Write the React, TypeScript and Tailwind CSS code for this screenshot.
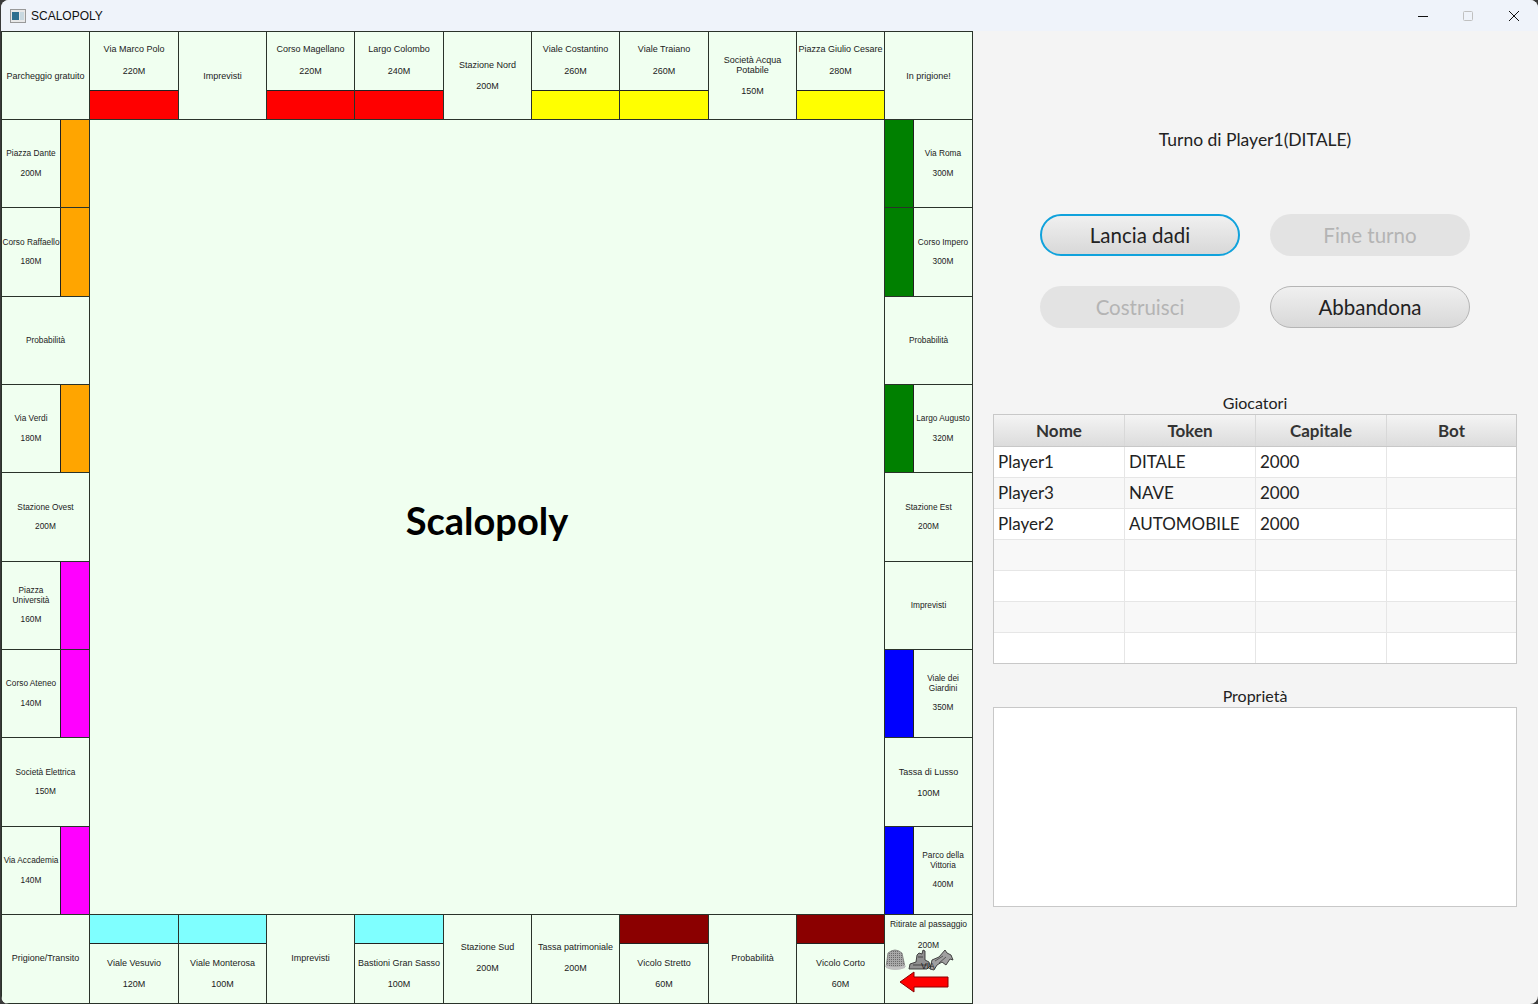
const TOP = [
  { n: "Parcheggio gratuito" },
  { n: "Via Marco Polo", p: "220M", c: "bg-[#ff0000]" },
  { n: "Imprevisti" },
  { n: "Corso Magellano", p: "220M", c: "bg-[#ff0000]" },
  { n: "Largo Colombo", p: "240M", c: "bg-[#ff0000]" },
  { n: "Stazione Nord", p: "200M" },
  { n: "Viale Costantino", p: "260M", c: "bg-[#ffff00]" },
  { n: "Viale Traiano", p: "260M", c: "bg-[#ffff00]" },
  { n: "Società Acqua Potabile", p: "150M" },
  { n: "Piazza Giulio Cesare", p: "280M", c: "bg-[#ffff00]" },
  { n: "In prigione!" },
];
const LEFT = [
  { n: "Piazza Dante", p: "200M", c: "bg-[#ffa500]" },
  { n: "Corso Raffaello", p: "180M", c: "bg-[#ffa500]" },
  { n: "Probabilità" },
  { n: "Via Verdi", p: "180M", c: "bg-[#ffa500]" },
  { n: "Stazione Ovest", p: "200M" },
  { n: "Piazza Università", p: "160M", c: "bg-[#ff00ff]" },
  { n: "Corso Ateneo", p: "140M", c: "bg-[#ff00ff]" },
  { n: "Società Elettrica", p: "150M" },
  { n: "Via Accademia", p: "140M", c: "bg-[#ff00ff]" },
];
const RIGHT = [
  { n: "Via Roma", p: "300M", c: "bg-[#008000]" },
  { n: "Corso Impero", p: "300M", c: "bg-[#008000]" },
  { n: "Probabilità" },
  { n: "Largo Augusto", p: "320M", c: "bg-[#008000]" },
  { n: "Stazione Est", p: "200M" },
  { n: "Imprevisti" },
  { n: "Viale dei Giardini", p: "350M", c: "bg-[#0000ff]" },
  { n: "Tassa di Lusso", p: "100M", big: true },
  { n: "Parco della Vittoria", p: "400M", c: "bg-[#0000ff]" },
];
const BOTTOM = [
  { n: "Prigione/Transito" },
  { n: "Viale Vesuvio", p: "120M", c: "bg-[#7fffff]" },
  { n: "Viale Monterosa", p: "100M", c: "bg-[#7fffff]" },
  { n: "Imprevisti" },
  { n: "Bastioni Gran Sasso", p: "100M", c: "bg-[#7fffff]" },
  { n: "Stazione Sud", p: "200M" },
  { n: "Tassa patrimoniale", p: "200M" },
  { n: "Vicolo Stretto", p: "60M", c: "bg-[#8b0000]" },
  { n: "Probabilità" },
  { n: "Vicolo Corto", p: "60M", c: "bg-[#8b0000]" },
];

type C = { n: string; p?: string; c?: string; big?: boolean };

function Label({ d, small, extra = "" }: { d: C; small?: boolean; extra?: string }) {
  return (
    <div className={`flex flex-1 min-w-0 flex-col items-center justify-center text-center text-[#222] ${small ? "text-[8.3px] leading-[9.5px] gap-[10px]" : "text-[9px] leading-[10px] gap-[11px]"} ${extra}`}>
      <span>{d.n}</span>
      {d.p && <span>{d.p}</span>}
    </div>
  );
}

const Strip = ({ c, cls }: { c: string; cls: string }) => <div className={`${c} ${cls} shrink-0 border-[#222]`} />;

function Cell({ d, side }: { d: C; side: "top" | "left" | "right" | "bottom" }) {
  const base = "flex min-w-0 min-h-0 bg-[#f0fff0] border-r border-b border-[#2a332a]";
  if (!d.c)
    return (
      <div className={base}>
        <Label d={d} small={(side === "left" || side === "right") && !d.big} extra={side === "bottom" ? "pb-[3px]" : ""} />
      </div>
    );
  if (side === "top") return <div className={`${base} flex-col`}><Label d={d} extra="pb-[3px] gap-[12px]" /><Strip c={d.c} cls="h-[29px] border-t" /></div>;
  if (side === "bottom") return <div className={`${base} flex-col`}><Strip c={d.c} cls="h-[29px] border-b" /><Label d={d} /></div>;
  if (side === "left") return <div className={base}><Label d={d} small /><Strip c={d.c} cls="w-[29px] border-l" /></div>;
  return <div className={base}><Strip c={d.c} cls="w-[29px] border-r" /><Label d={d} small /></div>;
}

function GoCell() {
  return (
    <div className="relative flex flex-col items-center bg-[#f0fff0] border-r border-b border-[#2a332a] pt-[4px] text-[8.5px] leading-[10px] text-[#222]">
      <span className="whitespace-nowrap">Ritirate al passaggio</span>
      <span className="mt-[11px]">200M</span>
      <svg className="absolute left-0 top-[30px]" width="70" height="30" viewBox="0 0 70 30">
        <defs>
          <pattern id="dots" width="2" height="2" patternUnits="userSpaceOnUse">
            <rect width="2" height="2" fill="#a8a8a8" />
            <rect width="1" height="1" fill="#6a6a6a" />
          </pattern>
        </defs>
        <path d="M1 22 L3 8 Q10 2 17 8 L20 22 Q10 26 1 22Z" fill="url(#dots)" stroke="#777" strokeWidth="0.8" />
        <path d="M1 20 Q10 24 20 20 L20 23 Q10 27 1 23Z" fill="#c0c0c0" />
        <path d="M24 24 L25 19 L31 17 L32 10 L34 8 L37 9 L38 5 L40 6 L40 15 L44 17 L45 21 L42 24 Z" fill="#909090" stroke="#333" strokeWidth="0.9" />
        <path d="M28 20 H42 M33 12 H38" stroke="#444" strokeWidth="1" />
        <path d="M45 24 L47 15 L54 12 L60 5 L62 8 L66 10 L68 15 L65 14 L61 20 L57 17 L52 20 L49 25 Z" fill="#a0a0a0" stroke="#333" strokeWidth="0.9" />
        <path d="M50 16 L58 11 M54 18 L61 12" stroke="#444" strokeWidth="0.8" />
      </svg>
      <span className="absolute left-[36px] top-[46px]">VIA</span>
      <svg className="absolute left-[14px] top-[55px]" width="50" height="24" viewBox="0 0 50 24">
        <path d="M1 12 L15 2 V7 H49 V17 H15 V22 Z" fill="#ff0000" stroke="#8b0000" strokeWidth="1" />
      </svg>
    </div>
  );
}

function Board() {
  return (
    <div className="grid w-[972px] shrink-0 grid-cols-[88px_89px_88px_88px_89px_88px_88px_89px_88px_88px_88px] grid-rows-[88px_88px_89px_88px_88px_89px_88px_88px_89px_88px_89px] border-l border-t border-[#2a332a] font-['Liberation_Sans',sans-serif]">
      {TOP.map((d, i) => <Cell key={i} d={d} side="top" />)}
      {LEFT.map((d, i) => (
        <div key={"l" + i} className="col-start-1 grid min-h-0" style={{ gridRowStart: i + 2 }}><Cell d={d} side="left" /></div>
      ))}
      <div className="col-start-2 col-end-11 row-start-2 row-end-11 flex items-center justify-center border-r border-b border-[#2a332a] bg-[#f0fff0]">
        <span className="mt-[6px] text-[38px] font-bold text-black font-['Lato',sans-serif]">Scalopoly</span>
      </div>
      {RIGHT.map((d, i) => (
        <div key={"r" + i} className="col-start-11 grid min-h-0" style={{ gridRowStart: i + 2 }}><Cell d={d} side="right" /></div>
      ))}
      {BOTTOM.map((d, i) => <Cell key={"b" + i} d={d} side="bottom" />)}
      <GoCell />
    </div>
  );
}

function Btn({ label, state }: { label: string; state: "focus" | "off" | "on" }) {
  const cls =
    state === "off"
      ? "bg-[#e3e3e3] text-[#b4b4b4]"
      : state === "focus"
      ? "bg-linear-to-b from-[#f0f0f0] to-[#d8d8d8] text-[#222] border-2 border-[#10a2dc]"
      : "bg-linear-to-b from-[#f0f0f0] to-[#d8d8d8] text-[#222] border border-[#b5b5b5]";
  return <div className={`flex h-[42px] w-[200px] items-center justify-center rounded-[21px] text-[20.5px] ${cls}`}>{label}</div>;
}

const PLAYERS = [["Player1", "DITALE", "2000"], ["Player3", "NAVE", "2000"], ["Player2", "AUTOMOBILE", "2000"], [], [], [], []];

function Players() {
  return (
    <div className="w-[524px] border border-[#c8c8c8] bg-white">
      <div className="grid h-[32px] grid-cols-[131px_131px_131px_1fr] border-b border-[#c8c8c8]">
        {["Nome", "Token", "Capitale", "Bot"].map((h) => (
          <div key={h} className="flex items-center justify-center border-r border-[#d8d8d8] bg-linear-to-b from-[#f4f4f4] to-[#dcdcdc] text-[17px] font-bold text-[#333] last:border-r-0">{h}</div>
        ))}
      </div>
      {PLAYERS.map((r, i) => (
        <div key={i} className={`grid h-[31px] grid-cols-[131px_131px_131px_1fr] border-b border-[#e6e6e6] last:h-[30px] last:border-b-0 ${i % 2 ? "bg-[#f8f8f8]" : "bg-white"}`}>
          {[0, 1, 2, 3].map((j) => (
            <div key={j} className="flex items-center border-r border-[#e6e6e6] px-[4px] text-[17px] text-[#222] last:border-r-0">{r[j] ?? ""}</div>
          ))}
        </div>
      ))}
    </div>
  );
}

export default function App() {
  return (
    <div className="h-[1004px] w-[1538px] overflow-hidden bg-[#3a3a3a]">
      <div className="ml-px flex h-[1004px] flex-col overflow-hidden rounded-[8px] bg-[#f4f4f4]">
        <div className="flex h-[31px] shrink-0 items-center justify-between bg-[#eff3fa] pl-[9px]">
          <div className="flex items-center gap-[5px] text-[12px] text-[#111] font-['Liberation_Sans',sans-serif]">
            <svg width="16" height="14" viewBox="0 0 16 14">
              <rect x="0.5" y="0.5" width="15" height="13" fill="#e8e8e8" stroke="#999" />
              <rect x="2" y="3" width="7" height="8" fill="#2f6f8f" />
              <rect x="10" y="3" width="4" height="8" fill="#c8d8e0" />
            </svg>
            <span>SCALOPOLY</span>
          </div>
          <div className="flex items-center">
            <svg className="mr-[35px]" width="10" height="10" viewBox="0 0 10 10"><path d="M0 5.5H10" stroke="#111" /></svg>
            <svg className="mr-[36px]" width="10" height="10" viewBox="0 0 10 10"><rect x="0.5" y="0.5" width="9" height="9" rx="1" fill="none" stroke="#c0c0c0" /></svg>
            <svg className="mr-[19px]" width="10" height="10" viewBox="0 0 10 10"><path d="M0 0L10 10M10 0L0 10" stroke="#111" /></svg>
          </div>
        </div>
        <div className="flex min-h-0 flex-1 items-start">
          <Board />
          <div className="flex flex-1 flex-col items-center pt-[99px] pr-[1px] text-[#222] font-['Lato',sans-serif]">
            <div className="h-[20px] text-[17.5px] leading-[20px]">Turno di Player1(DITALE)</div>
            <div className="mt-[64px] grid grid-cols-2 gap-x-[30px] gap-y-[30px]">
              <Btn label="Lancia dadi" state="focus" />
              <Btn label="Fine turno" state="off" />
              <Btn label="Costruisci" state="off" />
              <Btn label="Abbandona" state="on" />
            </div>
            <div className="mt-[64px] h-[22px] text-[16px] leading-[21px]">Giocatori</div>
            <Players />
            <div className="mt-[21px] h-[22px] text-[16px] leading-[21px]">Proprietà</div>
            <div className="h-[200px] w-[524px] border border-[#c8c8c8] bg-white" />
          </div>
        </div>
      </div>
    </div>
  );
}
